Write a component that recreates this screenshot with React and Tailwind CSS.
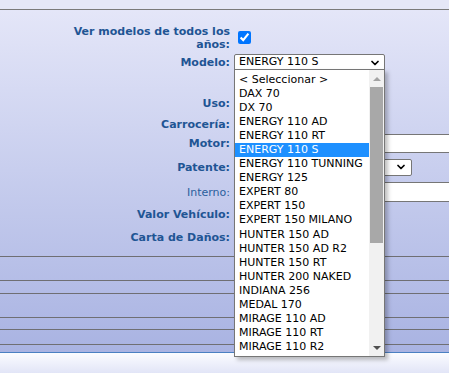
import { ChevronDown } from 'lucide-react'

const MODELOS = [
  '< Seleccionar >',
  'DAX 70',
  'DX 70',
  'ENERGY 110 AD',
  'ENERGY 110 RT',
  'ENERGY 110 S',
  'ENERGY 110 TUNNING',
  'ENERGY 125',
  'EXPERT 80',
  'EXPERT 150',
  'EXPERT 150 MILANO',
  'HUNTER 150 AD',
  'HUNTER 150 AD R2',
  'HUNTER 150 RT',
  'HUNTER 200 NAKED',
  'INDIANA 256',
  'MEDAL 170',
  'MIRAGE 110 AD',
  'MIRAGE 110 RT',
  'MIRAGE 110 R2',
]

function Label({ children, bold = true }) {
  return (
    <div
      className={`w-[230px] shrink-0 text-right text-[11px] leading-[13px] ${
        bold ? 'font-bold text-[#1f5594]' : 'font-normal text-[#2b5e9c]'
      }`}
    >
      {children}
    </div>
  )
}

function Row({ label, bold, className = '', children }) {
  return (
    <div className={`flex items-center ${className}`}>
      <Label bold={bold}>{label}</Label>
      <div className="flex-1 pl-[4px] flex items-center h-full">{children}</div>
    </div>
  )
}

export default function App() {
  return (
    <div className="relative w-[449px] h-[373px] overflow-hidden font-['DejaVu_Sans',Verdana,sans-serif]">
      {/* top band */}
      <div className="h-[9px] bg-[#e5e7f7]" />

      {/* form */}
      <div className="h-[343px] border-t border-[#7a7a7a] bg-gradient-to-b from-[#e4e6f8] to-[#a9b3e2]">
        <div className="flex items-start mt-[15px]">
          <Label>
            Ver modelos de todos los
            <br />
            años:
          </Label>
          <div className="pl-[4px]">
            <input
              type="checkbox"
              defaultChecked
              className="m-0 ml-[4px] mt-[6px] w-[13px] h-[13px] accent-[#0075ff]"
            />
          </div>
        </div>

        <Row label="Modelo:" className="h-[17px] mt-[3px]">
          <div className="w-[151px] h-[17px] bg-white border border-[#767676] rounded-[2px] flex items-center justify-between pl-[4px] pr-[3px] text-[11px] text-black">
            <span>ENERGY 110 S</span>
            <ChevronDown size={12} strokeWidth={3.5} />
          </div>
        </Row>

        <Row label="Uso:" className="h-[20px] mt-[22px]" />
        <Row label="Carrocería:" className="h-[20px] mt-[1px]" />
        <Row label="Motor:" className="h-[19px]">
          <div className="w-[240px] h-[19px] bg-white border border-[#767676]" />
        </Row>
        <Row label="Patente:" className="h-[20px] mt-[4px]">
          <div className="w-[178px] h-[17px] bg-white border border-[#767676] rounded-[2px] flex items-center justify-end pr-[4px]">
            <ChevronDown size={12} strokeWidth={3.5} />
          </div>
        </Row>
        <Row label="Interno:" bold={false} className="h-[20px] mt-[5px]">
          <div className="w-[240px] h-[20px] bg-white border border-[#767676]" />
        </Row>
        <Row label="Valor Vehículo:" className="h-[20px] mt-[2px]" />
        <Row label="Carta de Daños:" className="h-[20px] mt-[3px]" />

        {/* empty table rows */}
        <div className="mt-[9px] border-t border-[#6f6f73] h-[24px]" />
        <div className="border-t border-[#6f6f73] h-[13px]" />
        <div className="border-t border-[#6f6f73] h-[24px]" />
        <div className="border-t border-[#6f6f73] h-[12px]" />
        <div className="border-t border-[#6f6f73] h-[15px]" />
        <div className="border-t border-[#6f6f73]" />
      </div>

      {/* footer */}
      <div className="h-[21px] border-t border-[#4a80c2] bg-gradient-to-b from-[#fbfcff] to-[#e2e5f7]" />

      {/* open listbox */}
      <div className="absolute left-[234px] top-[69px] w-[151px] h-[288px] bg-white border border-[#767676] shadow-[3px_3px_4px_rgba(0,0,0,0.25)] flex">
        <div className="flex-1 pt-[2.5px] text-[11px] text-black">
          {MODELOS.map((m) => (
            <div
              key={m}
              className={`h-[14.1px] leading-[14.1px] pl-[4px] whitespace-nowrap ${
                m === 'ENERGY 110 S' ? 'bg-[#1e90ff] text-white' : ''
              }`}
            >
              {m}
            </div>
          ))}
        </div>
        <div className="w-[15px] bg-[#f1f1f1] flex flex-col items-center">
          <div className="h-[17px] flex items-center justify-center">
            <div className="w-0 h-0 border-l-[4px] border-r-[4px] border-b-[4px] border-l-transparent border-r-transparent border-b-[#a3a3a3]" />
          </div>
          <div className="w-[13px] h-[156px] bg-[#a8a8a8]" />
          <div className="flex-1" />
          <div className="h-[17px] flex items-center justify-center">
            <div className="w-0 h-0 border-l-[4px] border-r-[4px] border-t-[4px] border-l-transparent border-r-transparent border-t-[#505050]" />
          </div>
        </div>
      </div>
    </div>
  )
}
